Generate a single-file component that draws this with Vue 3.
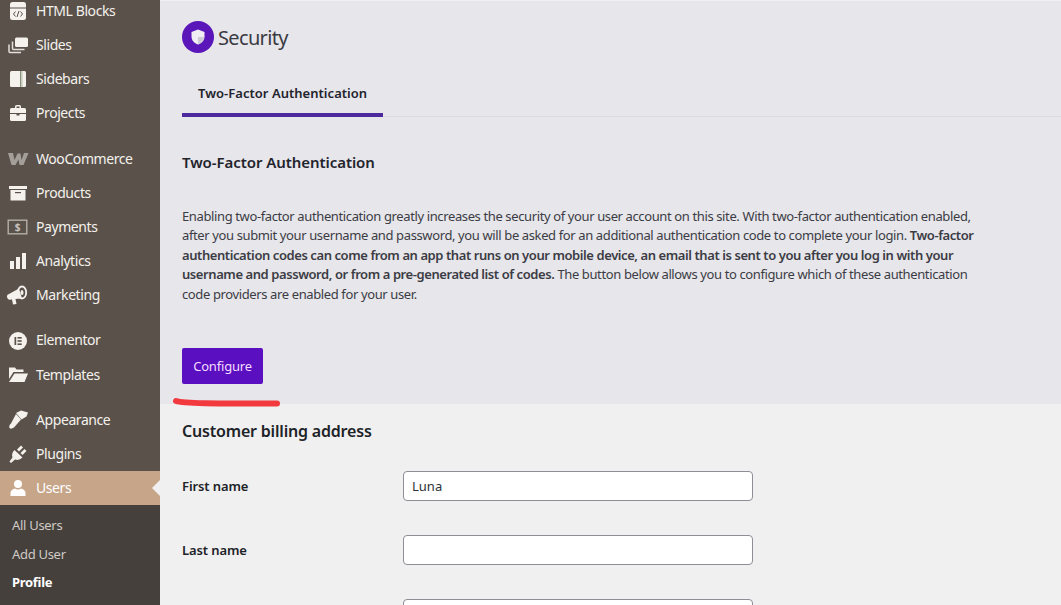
<script setup>
const groups = [
  [
    { label: 'HTML Blocks', icon: 'html' },
    { label: 'Slides', icon: 'slides' },
    { label: 'Sidebars', icon: 'sidebars' },
    { label: 'Projects', icon: 'projects' }
  ],
  [
    { label: 'WooCommerce', icon: 'woo' },
    { label: 'Products', icon: 'products' },
    { label: 'Payments', icon: 'payments' },
    { label: 'Analytics', icon: 'analytics' },
    { label: 'Marketing', icon: 'marketing' }
  ],
  [
    { label: 'Elementor', icon: 'elementor' },
    { label: 'Templates', icon: 'templates' }
  ],
  [
    { label: 'Appearance', icon: 'appearance' },
    { label: 'Plugins', icon: 'plugins' },
    { label: 'Users', icon: 'users', active: true }
  ]
]
const subItems = [
  { label: 'All Users' },
  { label: 'Add User' },
  { label: 'Profile', current: true }
]
</script>

<template>
  <div class="page">
    <aside class="sidebar">
      <div v-for="(group, gi) in groups" :key="gi" class="group">
        <div v-for="item in group" :key="item.label" class="item" :class="{ active: item.active }">
          <svg class="icon" viewBox="0 0 20 20" aria-hidden="true">
            <template v-if="item.icon === 'html'">
              <rect x="2" y="1" width="16" height="18" rx="2.500" fill="#f5f1ec" />
              <rect x="2" y="6.500" width="16" height="1" fill="#5a514b" />
              <path d="M7.500 10.500 5.500 13l2 2.500M12.500 10.500l2 2.500-2 2.500M11 10l-2 6" fill="none" stroke="#5a514b" stroke-width="1" />
            </template>
            <template v-else-if="item.icon === 'slides'">
              <rect x="7" y="2.500" width="13" height="9.500" rx="1.500" fill="#f5f1ec" />
              <path d="M4.500 6.500v7a1 1 0 0 0 1 1h11M1 9.500v7a1 1 0 0 0 1 1h11" fill="none" stroke="#e4dfd9" stroke-width="1.500" />
            </template>
            <template v-else-if="item.icon === 'sidebars'">
              <rect x="2" y="2" width="16" height="16" rx="1.500" fill="#f5f1ec" />
              <rect x="12" y="2" width="1.500" height="16" fill="#8a9080" />
              <rect x="13.500" y="2" width="1.500" height="16" fill="#d6dccb" />
            </template>
            <template v-else-if="item.icon === 'projects'">
              <path d="M7 5V3.500A1.500 1.500 0 0 1 8.500 2h3A1.500 1.500 0 0 1 13 3.500V5h-1.500V3.500h-3V5z" fill="#f5f1ec" />
              <path d="M3.500 5h13A1.500 1.500 0 0 1 18 6.500V10H2V6.500A1.500 1.500 0 0 1 3.500 5zM2 11h6.500v1.500h3V11H18v5.500a1.500 1.500 0 0 1-1.500 1.500h-13A1.500 1.500 0 0 1 2 16.500z" fill="#f5f1ec" />
            </template>
            <template v-else-if="item.icon === 'woo'">
              <path d="M0 4h5l1.500 7L9.500 4.500h3l1 6.500L16 4h4.500l-5 12h-4l-1-5.500L7.500 16h-4z" fill="#a39e98" />
            </template>
            <template v-else-if="item.icon === 'products'">
              <rect x="1" y="3" width="18" height="3" fill="#f5f1ec" />
              <path d="M2.500 7h15v10.500h-15z" fill="#f5f1ec" />
              <rect x="7" y="9" width="6" height="1.200" fill="#5a514b" />
            </template>
            <template v-else-if="item.icon === 'payments'">
              <rect x="0.200" y="3.200" width="18.600" height="13.600" fill="none" stroke="#b4afa9" stroke-width="1.400" />
              <text x="9.500" y="14" text-anchor="middle" class="dollar">$</text>
            </template>
            <template v-else-if="item.icon === 'analytics'">
              <rect x="2" y="10" width="4" height="8" fill="#f5f1ec" />
              <rect x="8" y="6" width="4" height="12" fill="#f5f1ec" />
              <rect x="14" y="2" width="4" height="16" fill="#f5f1ec" />
            </template>
            <template v-else-if="item.icon === 'marketing'">
              <path d="M1 9 11 3.500l3 10-4 .2-2.500.3 1 5-3.500.5-1-5-1 .1A2.800 2.800 0 0 1 1 9z" fill="#f5f1ec" />
              <ellipse cx="14" cy="7.500" rx="4.200" ry="6" fill="none" stroke="#f5f1ec" stroke-width="1.800" />
              <ellipse cx="14" cy="7.500" rx="1.500" ry="2.500" fill="#f5f1ec" />
            </template>
            <template v-else-if="item.icon === 'elementor'">
              <circle cx="10" cy="10" r="9" fill="#f5f1ec" />
              <rect x="6.500" y="6" width="1.700" height="8" fill="#5a514b" />
              <rect x="9.500" y="6" width="4.200" height="1.600" fill="#5a514b" />
              <rect x="9.500" y="9.200" width="4.200" height="1.600" fill="#5a514b" />
              <rect x="9.500" y="12.400" width="4.200" height="1.600" fill="#5a514b" />
            </template>
            <template v-else-if="item.icon === 'templates'">
              <path d="M1 2.500h6l1.500 2H15.500V7H5.500L1 14z" fill="#f5f1ec" />
              <path d="M6.500 8.500H20l-3.500 8.500H1z" fill="#f5f1ec" />
            </template>
            <template v-else-if="item.icon === 'appearance'">
              <path d="M8 3 13 .5 20 2.500 18.500 6.500 13.500 9.500z" fill="#f5f1ec" />
              <path d="M8 4l5 5.500L6 17.500Q3 19.500 1.500 18Q.5 15.500 3 13.500z" fill="#f5f1ec" />
            </template>
            <template v-else-if="item.icon === 'plugins'">
              <path d="M6.500 6l8 7.500Q11 17 7 15.500L3 19l-1.500-1.500L4.500 13.500Q3 9.500 6.500 6z" fill="#f5f1ec" />
              <path d="M9 5.500l4-4 2 2-4 4zM12.500 9l4-4 2 2-4 4z" fill="#f5f1ec" />
            </template>
            <template v-else-if="item.icon === 'users'">
              <circle cx="10" cy="6" r="4" fill="#fff" />
              <path d="M2.500 18v-3c0-2.500 2.500-4 4.500-4.500 1.800 1.200 4.200 1.200 6 0 2 .5 4.500 2 4.500 4.500v3z" fill="#fff" />
            </template>
          </svg>
          <span class="item-label">{{ item.label }}</span>
          <span v-if="item.active" class="arrow"></span>
        </div>
      </div>
      <div class="submenu">
        <div v-for="sub in subItems" :key="sub.label" class="sub-item" :class="{ current: sub.current }">{{ sub.label }}</div>
      </div>
    </aside>

    <main class="main">
      <section class="panel">
        <header class="title-row">
          <span class="badge">
            <svg viewBox="0 0 20 20" class="badge-icon" aria-hidden="true">
              <path d="M10 2.500 16.500 5v4.500c0 4-2.800 6.800-6.500 8-3.700-1.200-6.500-4-6.500-8V5z" fill="#f1eff4" />
              <path d="M10 10h6.300c-.6 3.500-3.100 6.200-6.300 7.500z" fill="#cfcbd4" />
            </svg>
          </span>
          <h1 class="title">Security</h1>
        </header>
        <nav class="tabs">
          <div class="tab">Two-Factor Authentication</div>
        </nav>
        <h2 class="panel-heading">Two-Factor Authentication</h2>
        <p class="desc">
          Enabling two-factor authentication greatly increases the security of your user account on this site. With two-factor authentication enabled,<br />
          after you submit your username and password, you will be asked for an additional authentication code to complete your login. <strong>Two-factor<br />
          authentication codes can come from an app that runs on your mobile device, an email that is sent to you after you log in with your<br />
          username and password, or from a pre-generated list of codes.</strong> The button below allows you to configure which of these authentication<br />
          code providers are enabled for your user.
        </p>
        <button class="configure" type="button">Configure</button>
        <svg class="scribble" viewBox="0 0 110 12" aria-hidden="true">
          <path d="M3 4C10 6.500 40 6.500 104 6.500" fill="none" stroke="#f23a3e" stroke-width="6" stroke-linecap="round" />
        </svg>
      </section>

      <section class="billing">
        <h2 class="billing-heading">Customer billing address</h2>
        <div class="field">
          <label class="field-label">First name</label>
          <input class="field-input" type="text" value="Luna" />
        </div>
        <div class="field">
          <label class="field-label">Last name</label>
          <input class="field-input" type="text" value="" />
        </div>
        <div class="field">
          <label class="field-label"></label>
          <input class="field-input" type="text" value="" />
        </div>
      </section>
    </main>
  </div>
</template>

<style>
html, body { margin: 0; overflow: hidden; background: #f0f0f1; }
</style>

<style scoped>
.page {
  display: flex;
  width: 1061px;
  height: 605px;
  overflow: hidden;
  font-family: "Noto Sans", "Open Sans", sans-serif;
  color: #1d2327;
}
.sidebar {
  flex: 0 0 160px;
  width: 160px;
  height: 605px;
  background: #5a514b;
  overflow: hidden;
  color: #f4f1ed;
}
.group { margin-bottom: 12px; }
.group:first-child { margin-top: -6px; }
.group:nth-child(2) { margin-bottom: 11px; }
.group:nth-child(3) { margin-bottom: 11px; }
.group:nth-child(4) { margin-bottom: 0; }
.item {
  position: relative;
  display: flex;
  align-items: center;
  height: 34px;
  padding-left: 8px;
  font-size: 14px;
  letter-spacing: -0.42px;
}
.group:nth-child(3) .item:first-child { height: 35px; }
.item-label { position: relative; top: -1px; }
.item.active { background: #c7a588; color: #fff; }
.icon { width: 20px; height: 20px; flex: none; margin-right: 8px; overflow: visible; }
.dollar { font: 700 10px "Noto Sans", sans-serif; fill: #c9c4be; }
.arrow {
  position: absolute;
  right: 0;
  top: 50%;
  margin-top: -8px;
  border: 8px solid transparent;
  border-right-color: #f0f0f1;
  border-left: 0;
}
.submenu { background: #45403c; padding: 6px 0 0; height: 100px; box-sizing: border-box; }
.sub-item {
  height: 28.500px;
  line-height: 28.500px;
  padding-left: 12px;
  font-size: 13px;
  letter-spacing: -0.3px;
  color: #cfcac6;
}
.sub-item.current { color: #fff; font-weight: 700; }

.main { flex: 1; display: flex; flex-direction: column; min-width: 0; }
.panel {
  position: relative;
  height: 404px;
  box-sizing: border-box;
  background: #e6e6eb;
  border-top: 1px solid #f0f0f1;
  padding: 20px 0 0 22px;
}
.title-row { display: flex; align-items: center; height: 32px; gap: 4px; }
.badge {
  width: 32px;
  height: 32px;
  border-radius: 50%;
  background: #5a16b8;
  display: flex;
  align-items: center;
  justify-content: center;
}
.badge-icon { width: 20px; height: 20px; }
.title { margin: 0; font-size: 20px; font-weight: 400; letter-spacing: -0.65px; color: #3a3a42; }
.tabs { margin-top: 18px; border-bottom: 1px solid #dcdce0; }
.tab {
  width: 201px;
  height: 46px;
  box-sizing: border-box;
  padding-left: 16px;
  line-height: 44px;
  font-size: 13px;
  font-weight: 600;
  letter-spacing: 0.03px;
  color: #23232b;
  border-bottom: 4px solid #4c2a9e;
  margin-bottom: -1px;
}
.panel-heading {
  margin: 34px 0 0;
  font-size: 15px;
  line-height: 22px;
  font-weight: 600;
  letter-spacing: -0.06px;
  color: #23232b;
}
.desc {
  margin: 33.500px 0 0;
  font-size: 13px;
  line-height: 19.500px;
  letter-spacing: -0.38px;
  color: #3c3c44;
  white-space: nowrap;
}
.desc strong { font-weight: 600; letter-spacing: -0.42px; }
.configure {
  display: block;
  margin-top: 43.500px;
  width: 81px;
  height: 36px;
  padding: 0;
  border: 0;
  border-radius: 2px;
  background: #5a0fc0;
  color: #f3dcff;
  font-family: inherit;
  font-size: 13px;
  letter-spacing: -0.2px;
}
.scribble {
  position: absolute;
  left: 13px;
  top: 396px;
  width: 110px;
  height: 12px;
  overflow: visible;
}
.billing {
  flex: 1;
  background: #f0f0f1;
  padding: 0 0 0 22px;
  overflow: hidden;
}
.billing-heading {
  margin: 16px 0 0;
  font-size: 16px;
  line-height: 23px;
  font-weight: 600;
  letter-spacing: -0.19px;
  color: #1d2327;
}
.field {
  display: flex;
  align-items: center;
  height: 30px;
  margin-top: 34px;
}
.billing-heading + .field { margin-top: 28px; }
.field-label {
  flex: 0 0 221px;
  font-size: 13px;
  font-weight: 600;
  letter-spacing: -0.1px;
  color: #1d2327;
}
.field-input {
  width: 350px;
  height: 30px;
  box-sizing: border-box;
  border: 1px solid #8c8f94;
  border-radius: 4px;
  background: #fff;
  padding: 0 8px;
  font-family: inherit;
  font-size: 13px;
  color: #2c3338;
  outline: none;
}
</style>
